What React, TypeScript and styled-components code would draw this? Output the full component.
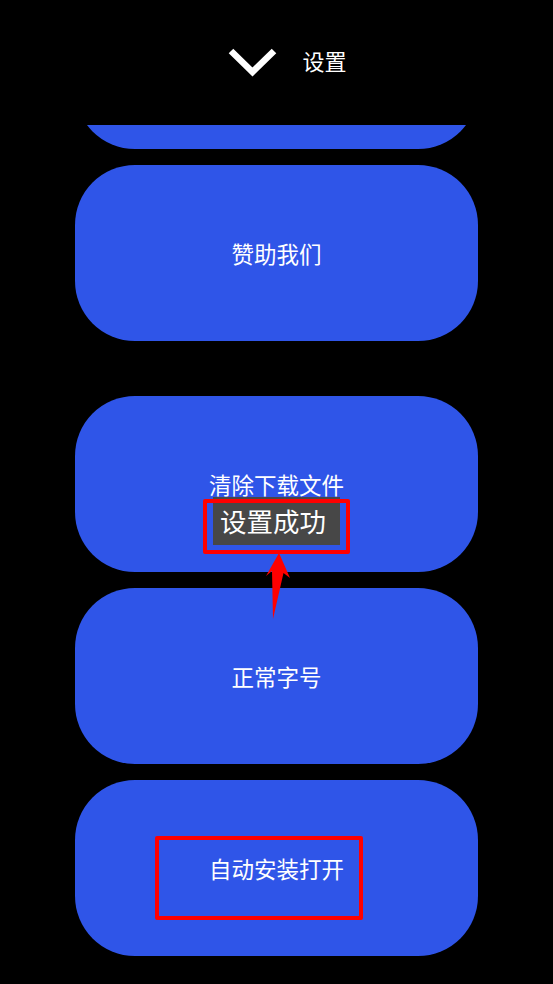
import React from "react";
import styled, { createGlobalStyle } from "styled-components";

const Global = createGlobalStyle`
  html, body { margin: 0; padding: 0; background: #000; }
  body { font-family: "Noto Sans CJK SC", "Noto Sans", sans-serif; }
  * { box-sizing: border-box; }
`;

const Page = styled.div`
  position: relative;
  width: 553px;
  height: 984px;
  background: #000;
  overflow: hidden;
  display: flex;
  flex-direction: column;
`;

const Header = styled.header`
  flex: 0 0 125px;
  display: flex;
  align-items: center;
  justify-content: center;
  gap: 24px;
  padding-left: 22px;
`;

const Title = styled.h1`
  margin: 0 0 5px;
  font-size: 22px;
  font-weight: 400;
  color: #fff;
  line-height: 1;
`;

const List = styled.main`
  flex: 1;
  overflow: hidden;
  display: flex;
  flex-direction: column;
  align-items: center;
  gap: 16px;
`;

const Card = styled.button<{ $offset?: number }>`
  flex: 0 0 176px;
  width: 403px;
  margin-top: ${(p) => p.$offset ?? 0}px;
  border: none;
  border-radius: 60px;
  background: #2f55e8;
  color: #fff;
  font-family: inherit;
  font-size: 22.5px;
  display: flex;
  align-items: center;
  justify-content: center;
  padding: 0;
`;

const Toast = styled.div`
  position: absolute;
  top: 497px;
  left: 213px;
  width: 127px;
  height: 48px;
  background: #474747;
  color: #fff;
  font-size: 26.5px;
  display: flex;
  align-items: center;
  padding-left: 7px;
  line-height: 1;
`;

const Mark = styled.div<{ $x: number; $y: number; $w: number; $h: number }>`
  position: absolute;
  left: ${(p) => p.$x}px;
  top: ${(p) => p.$y}px;
  width: ${(p) => p.$w}px;
  height: ${(p) => p.$h}px;
  border: 4px solid #ff0000;
  border-radius: 2px;
`;

const Arrow = styled.svg`
  position: absolute;
  left: 0;
  top: 0;
  pointer-events: none;
`;

const Chevron = () => (
  <svg width="50" height="30" viewBox="0 0 50 30">
    <polyline
      points="3,3 24.5,24 46,3"
      fill="none"
      stroke="#fff"
      strokeWidth="6.5"
      strokeLinecap="butt"
      strokeLinejoin="miter"
    />
  </svg>
);

export default function App() {
  return (
    <>
      <Global />
      <Page>
        <Header>
          <Chevron />
          <Title>设置</Title>
        </Header>
        <List>
          <Card $offset={-152} aria-label="更多设置" />
          <Card>赞助我们</Card>
          <Card $offset={39}>清除下载文件</Card>
          <Card>正常字号</Card>
          <Card>自动安装打开</Card>
        </List>
        <Toast>设置成功</Toast>
        <Mark $x={203} $y={499} $w={147} $h={55} />
        <Mark $x={155} $y={836} $w={208} $h={84} />
        <Arrow width="553" height="984" viewBox="0 0 553 984">
          <polygon
            points="279,553 290,578 283.5,573 273,619 272,571 266,576"
            fill="#ff0000"
          />
        </Arrow>
      </Page>
    </>
  );
}
